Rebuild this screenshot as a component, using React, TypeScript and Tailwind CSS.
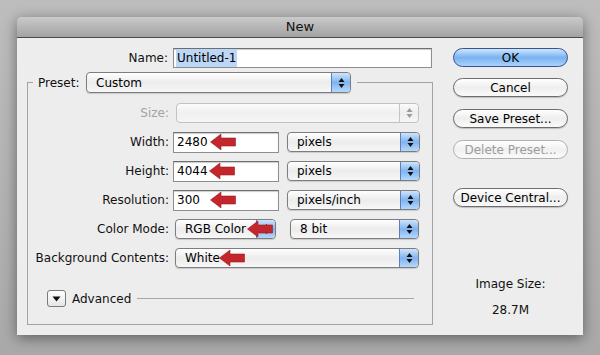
import React from 'react'

const Stepper = ({ disabled }: { disabled?: boolean }) => (
    <div
        className={
            'flex h-full w-[19px] items-center justify-center rounded-r-[4px] border-l ' +
            (disabled
                ? 'border-[#c4c4c4] bg-gradient-to-b from-[#fafafa] via-[#eeeeee] to-[#f6f6f6]'
                : 'border-[#5b7fb8] bg-gradient-to-b from-[#cfe4fb] via-[#7fb4f0] to-[#b4d8fc]')
        }
    >
        <svg width="7" height="12" viewBox="0 0 7 12">
            <path d="M3.5 1 L6.5 5 L0.5 5 Z" fill={disabled ? '#9a9a9a' : '#111'} />
            <path d="M3.5 11 L6.5 7 L0.5 7 Z" fill={disabled ? '#9a9a9a' : '#111'} />
        </svg>
    </div>
)

const Popup = ({ label, className, disabled }: { label: string; className: string; disabled?: boolean }) => (
    <div
        className={
            'flex h-[20px] items-stretch rounded-[4px] border ' +
            (disabled
                ? 'border-[#c2c2c2] bg-gradient-to-b from-[#fbfbfb] via-[#f0f0f0] to-[#f6f6f6] '
                : 'border-[#7d7d7d] bg-gradient-to-b from-[#ffffff] via-[#ececec] to-[#f7f7f7] shadow-[0_1px_1px_rgba(0,0,0,0.15)] ') +
            className
        }
    >
        <div className="flex flex-1 items-center pl-[9px] text-[12px] leading-none text-black">{label}</div>
        <Stepper disabled={disabled} />
    </div>
)

const Arrow = ({ left }: { left: number }) => (
    <svg
        width="26"
        height="17"
        viewBox="0 0 26 17"
        className="absolute top-1/2 -translate-y-1/2"
        style={{ left }}
    >
        <path d="M0.5 8.5 L11 0.5 L11 4.5 L25.5 4.5 L25.5 12.5 L11 12.5 L11 16.5 Z" fill="#c3262c" stroke="#9d1b20" strokeWidth="0.6" />
    </svg>
)

const TextField = ({ value, arrow }: { value: string; arrow?: number }) => (
    <div className="relative ml-[4px] flex h-[21px] w-[106px] items-center border border-[#8e8e8e] border-t-[#6e6e6e] bg-white pl-[3px] text-[12px] shadow-[inset_0_1px_1px_rgba(0,0,0,0.2)]">
        {value}
        {arrow !== undefined && <Arrow left={arrow} />}
    </div>
)

const Row = ({ label, children, muted }: { label: string; children: React.ReactNode; muted?: boolean }) => (
    <div className="flex h-[20px] items-center">
        <div className={'w-[141px] text-right text-[12px] ' + (muted ? 'text-[#a3a3a3]' : 'text-[#111]')}>{label}</div>
        {children}
    </div>
)

const AquaButton = ({ label, primary, disabled, className = '' }: { label: string; primary?: boolean; disabled?: boolean; className?: string }) => (
    <div
        className={
            'flex h-[19px] w-[115px] items-center justify-center rounded-full border text-[12px] ' +
            (primary
                ? 'border-[#34538f] bg-gradient-to-b from-[#cfe5fc] via-[#7ab3f1] to-[#a9d2fb] text-black '
                : disabled
                  ? 'border-[#b0b0b0] bg-gradient-to-b from-[#ffffff] via-[#f1f1f1] to-[#fafafa] text-[#9c9c9c] '
                  : 'border-[#6c6c6c] bg-gradient-to-b from-[#ffffff] via-[#eeeeee] to-[#fafafa] text-black shadow-[0_1px_1px_rgba(0,0,0,0.2)] ') +
            className
        }
    >
        {label}
    </div>
)

export default function App() {
    return (
        <div className="h-[355px] w-[600px] overflow-hidden bg-gradient-to-b from-[#bdbdbd] to-[#a9a9a9] pt-[17px] pl-[17px] font-['DejaVu_Sans',sans-serif]">
            <div className="w-[566px] rounded-t-[5px] shadow-[0_3px_14px_rgba(0,0,0,0.45)]">
                {/* title bar */}
                <div className="flex h-[21px] items-center justify-center rounded-t-[5px] border-b border-[#4a4a4a] bg-gradient-to-b from-[#cacaca] to-[#a2a2a2] text-[13px] text-[#111]">
                    New
                </div>

                {/* body */}
                <div className="flex h-[297px] bg-[#ededed]">
                    <div className="w-[436px] pt-[10px]">
                        <div className="flex h-[20px] items-center">
                            <div className="w-[151px] text-right text-[12px] text-[#111]">Name:</div>
                            <div className="ml-[5px] flex h-[20px] w-[259px] items-center border border-[#8e8e8e] border-t-[#6e6e6e] bg-white pl-[2px] text-[12px] shadow-[inset_0_1px_1px_rgba(0,0,0,0.2)]">
                                <span className="bg-[#bcd6f6] px-[1px]">Untitled-1</span>
                            </div>
                        </div>

                        <fieldset className="mt-[4px] ml-[10px] w-[406px] border border-[#a3a3a3] pb-[17px]">
                            <legend className="ml-[5px] pr-[6px] pl-[5px]">
                                <div className="flex items-center">
                                    <div className="w-[48px] text-[12px] text-[#111]">Preset:</div>
                                    <Popup label="Custom" className="h-[21px] w-[265px]" />
                                </div>
                            </legend>

                            <div className="mt-[10px] flex flex-col gap-[9px]">
                                <Row label="Size:" muted>
                                    <Popup label="" disabled className="ml-[7px] w-[243px]" />
                                </Row>
                                <Row label="Width:">
                                    <TextField value="2480" arrow={36} />
                                    <Popup label="pixels" className="ml-[8px] w-[133px]" />
                                </Row>
                                <Row label="Height:">
                                    <TextField value="4044" arrow={35} />
                                    <Popup label="pixels" className="ml-[8px] w-[133px]" />
                                </Row>
                                <Row label="Resolution:">
                                    <TextField value="300" arrow={36} />
                                    <Popup label="pixels/inch" className="ml-[8px] w-[133px]" />
                                </Row>
                                <Row label="Color Mode:">
                                    <div className="relative ml-[6px]">
                                        <Popup label="RGB Color" className="w-[101px]" />
                                        <Arrow left={72} />
                                    </div>
                                    <Popup label="8 bit" className="ml-[14px] w-[129px]" />
                                </Row>
                                <Row label="Background Contents:">
                                    <div className="relative ml-[6px]">
                                        <Popup label="White" className="w-[244px]" />
                                        <Arrow left={44} />
                                    </div>
                                </Row>
                            </div>

                            <div className="mt-[22px] flex h-[17px] items-center">
                                <div className="ml-[19px] flex h-[17px] w-[19px] items-center justify-center rounded-[3px] border border-[#7a7a7a] bg-gradient-to-b from-[#ffffff] to-[#e6e6e6]">
                                    <svg width="9" height="6" viewBox="0 0 9 6">
                                        <path d="M0.5 0.5 L8.5 0.5 L4.5 5.5 Z" fill="#111" />
                                    </svg>
                                </div>
                                <div className="ml-[6px] text-[12px] text-[#111]">Advanced</div>
                                <div className="mr-[18px] ml-[6px] h-px flex-1 bg-[#a8a8a8]" />
                            </div>
                        </fieldset>
                    </div>

                    <div className="flex w-[115px] flex-col pt-[10px]">
                        <AquaButton label="OK" primary />
                        <AquaButton label="Cancel" className="mt-[11px]" />
                        <AquaButton label="Save Preset..." className="mt-[12px]" />
                        <AquaButton label="Delete Preset..." disabled className="mt-[12px]" />
                        <AquaButton label="Device Central..." className="mt-[29px]" />
                        <div className="mt-[68px] text-center text-[12px] text-[#111]">Image Size:</div>
                        <div className="mt-[8px] text-center text-[12px] text-[#111]">28.7M</div>
                    </div>
                </div>
            </div>
        </div>
    )
}
